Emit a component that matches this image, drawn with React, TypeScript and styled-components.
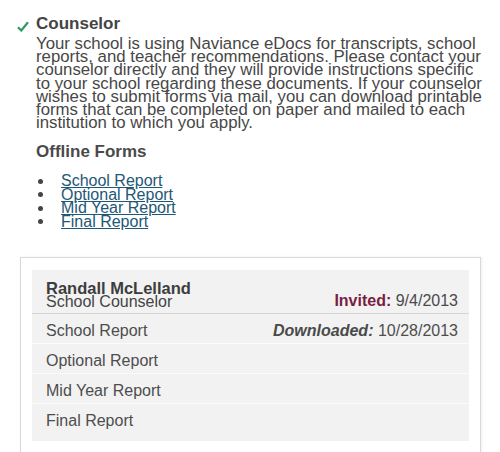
import React, { FC } from 'react'
import styled, { createGlobalStyle } from 'styled-components'

const GlobalStyle = createGlobalStyle`
  body {
    margin: 0;
    background: #fff;
    font-family: "Liberation Sans", Arial, sans-serif;
    color: #4d4d4d;
  }
`

const Page = styled.div`
  width: 500px;
  height: 452px;
  overflow: hidden;
  padding-left: 17px;
  box-sizing: border-box;
`

const Section = styled.div`
  display: flex;
  padding-top: 15px;
`

const Check = styled.svg`
  width: 12px;
  height: 11px;
  margin-top: 6px;
  margin-right: 7px;
  flex-shrink: 0;
`

const Content = styled.div`
  width: 448px;
`

const Heading = styled.h2`
  margin: 0;
  font-size: 17px;
  line-height: 18px;
  font-weight: bold;
  color: #444;
`

const Intro = styled.p`
  margin: 4px 0 0 0;
  font-size: 16.8px;
  line-height: 13.2px;
  color: #474747;
`

const SubHeading = styled.h3`
  margin: 14px 0 0 0;
  font-size: 17px;
  line-height: 18px;
  font-weight: bold;
  color: #4a4a4a;
`

const FormList = styled.ul`
  list-style: none;
  margin: 13px 0 0 0;
  padding: 0;
`

const FormItem = styled.li`
  display: flex;
  align-items: center;
  font-size: 16px;
  line-height: 13.5px;

  &::before {
    content: '';
    width: 5px;
    height: 5px;
    border-radius: 50%;
    background: #444;
    margin: 0 18px 0 2px;
  }
`

const FormLink = styled.a`
  color: #1e5876;
  text-decoration: underline;
`

const Card = styled.div`
  margin: 29px 19px 0 3px;
  border: 1px solid #d9d9d9;
  padding: 12px 11px 24px;
  box-shadow: 1px 0 3px rgba(0, 0, 0, 0.06);
`

const Panel = styled.div`
  background: #f2f2f2;
`

const HeaderRow = styled.div`
  display: flex;
  justify-content: space-between;
  align-items: flex-end;
  padding: 12px 11px 5px 14px;
  border-bottom: 1px solid #d4d4d4;
`

const Person = styled.div`
  line-height: 12px;
`

const Name = styled.div`
  font-size: 16.5px;
  font-weight: bold;
  color: #3d3d3d;
`

const Title = styled.div`
  margin-top: 2px;
  font-size: 16px;
  color: #444;
`

const Status = styled.div`
  font-size: 16px;
  line-height: 12px;
  margin-bottom: 1px;
  color: #4a4a4a;
`

const InvitedLabel = styled.span`
  font-weight: bold;
  color: #7b1d42;
`

const DownloadedLabel = styled.span`
  font-weight: bold;
  font-style: italic;
  color: #4a4a4a;
`

const Row = styled.div<{ last?: boolean }>`
  display: flex;
  justify-content: space-between;
  padding: ${({ last }) => (last ? '4px 11px 8px 14px' : '4px 11px 0 14px')};
  font-size: 16px;
  line-height: 25px;
  color: #4d4d4d;
  & + & {
    border-top: 1px solid #fbfbfb;
  }
`

const forms = ['School Report', 'Optional Report', 'Mid Year Report', 'Final Report']

const App: FC = () => (
  <>
    <GlobalStyle />
    <Page>
      <Section>
        <Check viewBox="0 0 12 11">
          <path d="M1 6.2 L4.3 9.5 L11 1.2" fill="none" stroke="#2f9a63" strokeWidth="2.2" />
        </Check>
        <Content>
          <Heading>Counselor</Heading>
          <Intro>
            Your school is using Naviance eDocs for transcripts, school reports, and teacher recommendations. Please
            contact your counselor directly and they will provide instructions specific to your school regarding these
            documents. If your counselor wishes to submit forms via mail, you can download printable forms that can be
            completed on paper and mailed to each institution to which you apply.
          </Intro>
          <SubHeading>Offline Forms</SubHeading>
          <FormList>
            {forms.map((f) => (
              <FormItem key={f}>
                <FormLink href="#">{f}</FormLink>
              </FormItem>
            ))}
          </FormList>
        </Content>
      </Section>
      <Card>
        <Panel>
          <HeaderRow>
            <Person>
              <Name>Randall McLelland</Name>
              <Title>School Counselor</Title>
            </Person>
            <Status>
              <InvitedLabel>Invited:</InvitedLabel> 9/4/2013
            </Status>
          </HeaderRow>
          {forms.map((f, i) => (
            <Row key={f} last={i === forms.length - 1}>
              <span>{f}</span>
              {i === 0 && (
                <span>
                  <DownloadedLabel>Downloaded:</DownloadedLabel> 10/28/2013
                </span>
              )}
            </Row>
          ))}
        </Panel>
      </Card>
    </Page>
  </>
)

export default App
